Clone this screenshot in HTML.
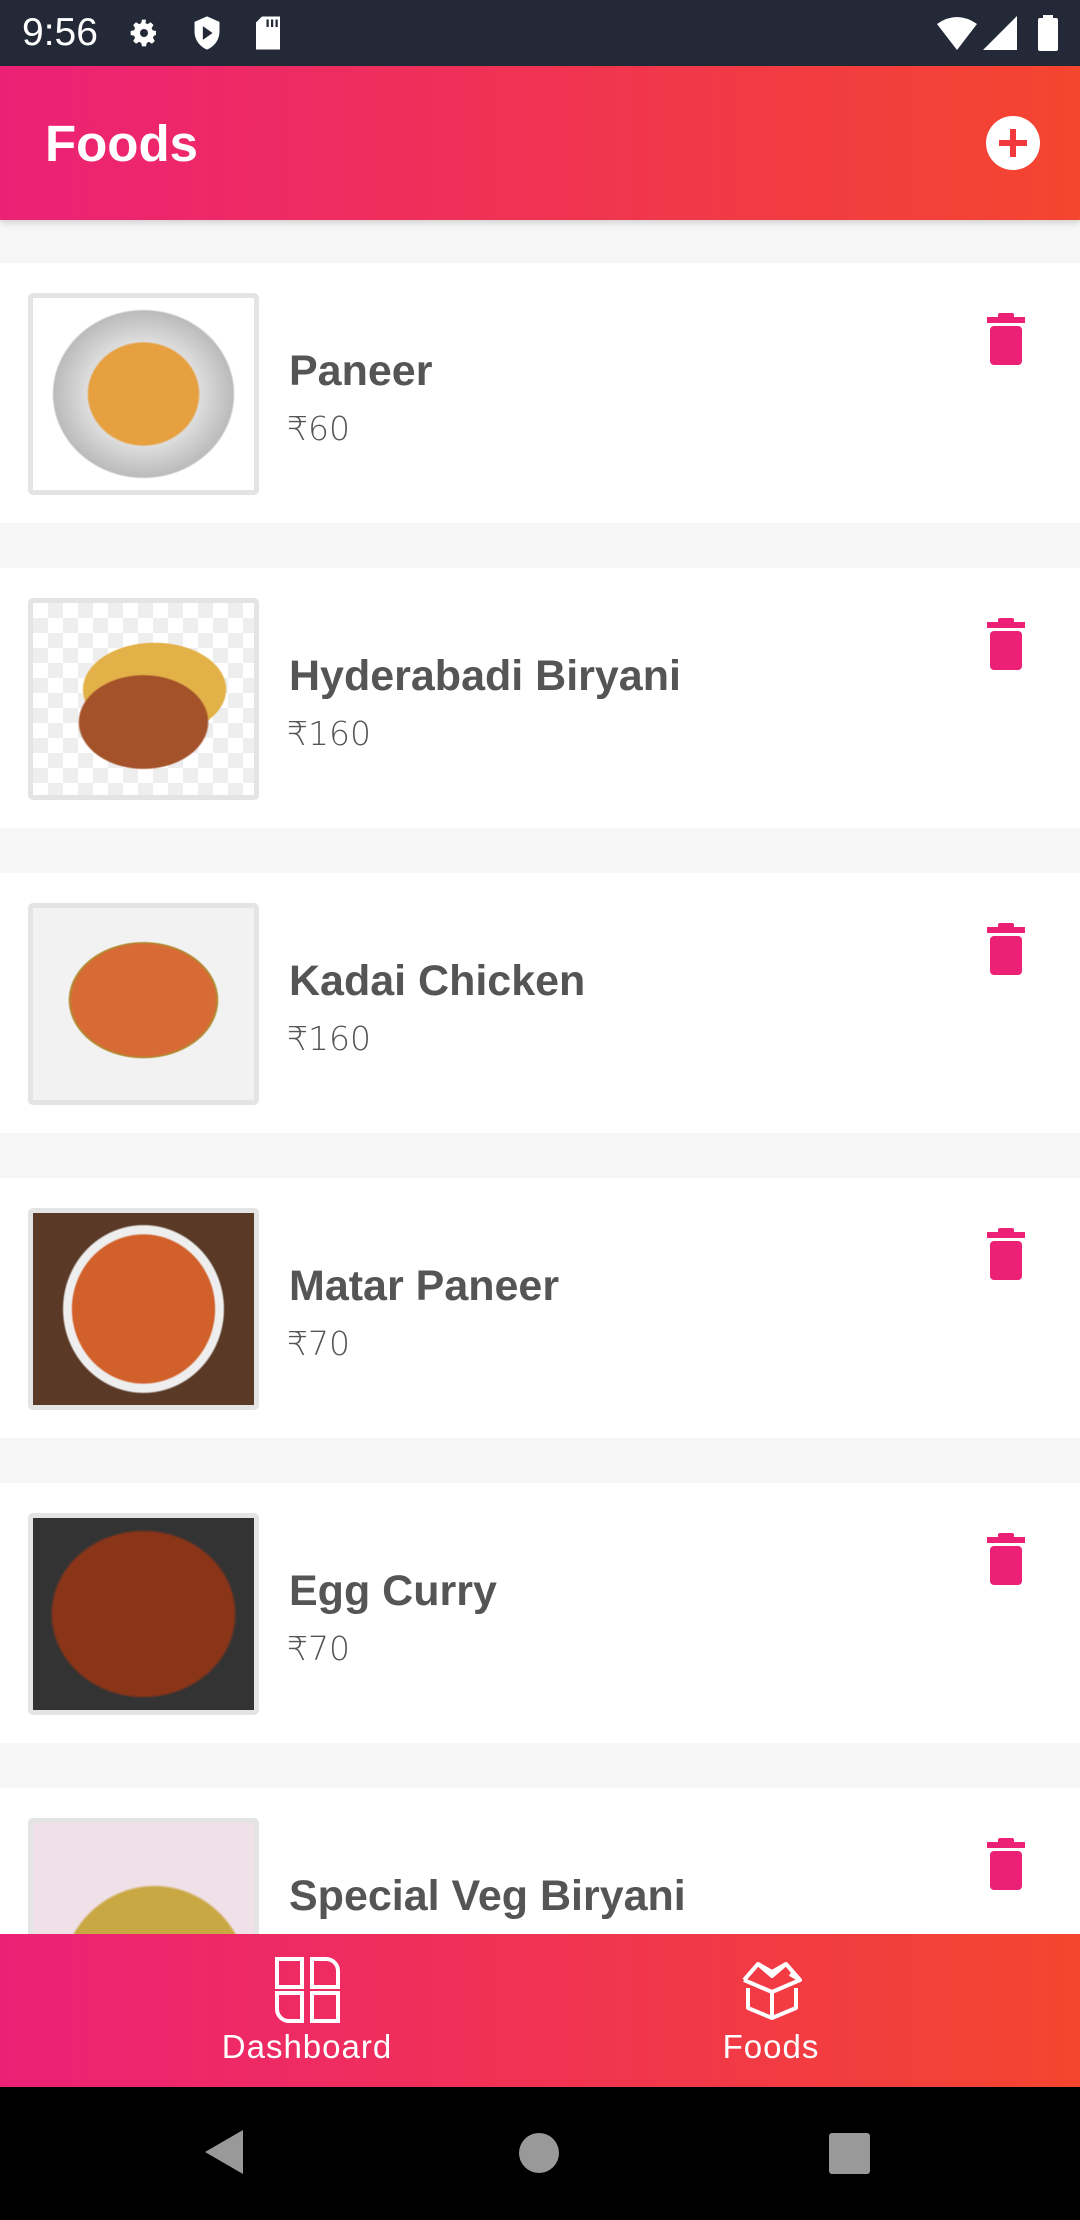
<!DOCTYPE html>
<html><head><meta charset="utf-8"><style>
*{margin:0;padding:0;box-sizing:border-box}
body{width:1080px;height:2220px;overflow:hidden;background:#f6f6f6;font-family:"Liberation Sans","DejaVu Sans",sans-serif;position:relative}
.sb{position:absolute;top:0;left:0;width:1080px;height:66px;background:#232937;color:#fff}
.sb .t{position:absolute;left:22px;top:11px;font-size:39px}
.ab{position:absolute;top:66px;left:0;width:1080px;height:154px;background:linear-gradient(90deg,#ec2176,#f4452f);box-shadow:0 3px 6px rgba(0,0,0,.15);z-index:2}
.ab .ti{position:absolute;left:45px;top:48px;color:#fff;font-size:51px;font-weight:bold}
.plus{position:absolute;left:986px;top:116px;width:54px;height:54px;border-radius:50%;background:#fff;z-index:3}
.plus:before,.plus:after{content:"";position:absolute;background:#f2393e;left:24px;top:13px;width:6px;height:28px}
.plus:after{left:13px;top:24px;width:28px;height:6px}
.card{position:absolute;left:0;width:1080px;height:260px;background:#fff}
.img{position:absolute;left:28px;top:30px;width:231px;height:202px;border:5px solid #e4e4e4;border-radius:5px;overflow:hidden}
.name{position:absolute;left:289px;top:84px;font-size:43px;font-weight:bold;color:#555;white-space:nowrap}
.price{position:absolute;left:287px;top:146px;font-size:33px;color:#555;font-family:"DejaVu Sans",sans-serif;font-weight:300}
.trash{position:absolute;left:987px;top:50px}
.bn{position:absolute;top:1934px;left:0;width:1080px;height:153px;background:linear-gradient(90deg,#ec2176,#f4452f);color:#fff}
.bn .l{position:absolute;top:94px;font-size:33px;transform:translateX(-50%);letter-spacing:1px}
.nav{position:absolute;top:2087px;left:0;width:1080px;height:133px;background:#000}
</style></head><body>
<div class="sb"><span class="t">9:56</span>
<svg style="position:absolute;left:128px;top:17px" width="32" height="32" viewBox="0 0 24 24"><path fill="#fff" d="M12 8a4 4 0 100 8 4 4 0 000-8zm9 5.5v-3l-2.6-.6-.7-1.6 1.4-2.3-2.1-2.1-2.3 1.4-1.6-.7L13.5 2h-3l-.6 2.6-1.6.7-2.3-1.4-2.1 2.1 1.4 2.3-.7 1.6L2 10.5v3l2.6.6.7 1.6-1.4 2.3 2.1 2.1 2.3-1.4 1.6.7.6 2.6h3l.6-2.6 1.6-.7 2.3 1.4 2.1-2.1-1.4-2.3.7-1.6z"/><circle cx="12" cy="12" r="3" fill="#232937"/></svg>
<svg style="position:absolute;left:190px;top:15px" width="34" height="36" viewBox="0 0 24 26"><path fill="#fff" d="M12 1L3 5v7c0 6 4 11 9 13 5-2 9-7 9-13V5z"/><path fill="#232937" d="M9 8l7 5-7 5z"/></svg>
<svg style="position:absolute;left:253px;top:15px" width="30" height="36" viewBox="0 0 20 24"><path fill="#fff" d="M6 1h12v22H2V5z"/><path fill="#232937" d="M9 3h1.5v5H9zm3 0h1.5v5H12zm3 0h1.5v5H15z"/></svg>
<svg style="position:absolute;left:937px;top:16px" width="40" height="34" viewBox="0 0 40 34"><path fill="#fff" d="M0 8Q20-6 40 8L20 34z"/></svg>
<svg style="position:absolute;left:983px;top:16px" width="34" height="34" viewBox="0 0 34 34"><path fill="#fff" d="M34 0v34H0z"/></svg>
<svg style="position:absolute;left:1037px;top:15px" width="22" height="36" viewBox="0 0 22 36"><rect x="6" y="0" width="10" height="4" fill="#fff"/><rect x="1" y="3" width="20" height="33" rx="2" fill="#fff"/></svg>
</div>
<div class="ab"><div class="ti">Foods</div></div>
<div class="plus"></div>

<div class="card" style="top:263px"><div class="img" style="background:radial-gradient(ellipse 45% 48% at 50% 50%,#e6a040 0 55%,#ddd 57%,#bbb 90%,#fff 92%)"></div><div class="name">Paneer</div><div class="price">₹60</div><svg class="trash" width="38" height="52" viewBox="0 0 38 52"><rect x="11" y="0" width="16" height="5" rx="2" fill="#ec2176"/><rect x="0" y="4" width="38" height="6" fill="#ec2176"/><rect x="3" y="13" width="32" height="39" rx="4" fill="#ec2176"/></svg></div>

<div class="card" style="top:568px"><div class="img" style="background:radial-gradient(ellipse 48% 40% at 50% 62%,#a4522a 0 60%,transparent 62%),radial-gradient(ellipse 40% 30% at 55% 45%,#e2b248 0 80%,transparent 82%),repeating-conic-gradient(#eee 0 25%,#fff 0 50%) 0 0/30px 30px"></div><div class="name">Hyderabadi Biryani</div><div class="price">₹160</div><svg class="trash" width="38" height="52" viewBox="0 0 38 52"><rect x="11" y="0" width="16" height="5" rx="2" fill="#ec2176"/><rect x="0" y="4" width="38" height="6" fill="#ec2176"/><rect x="3" y="13" width="32" height="39" rx="4" fill="#ec2176"/></svg></div>

<div class="card" style="top:873px"><div class="img" style="background:radial-gradient(ellipse 38% 34% at 50% 48%,#d86a35 0 85%,#b08a30 88%,transparent 90%),#f2f2f2"></div><div class="name">Kadai Chicken</div><div class="price">₹160</div><svg class="trash" width="38" height="52" viewBox="0 0 38 52"><rect x="11" y="0" width="16" height="5" rx="2" fill="#ec2176"/><rect x="0" y="4" width="38" height="6" fill="#ec2176"/><rect x="3" y="13" width="32" height="39" rx="4" fill="#ec2176"/></svg></div>

<div class="card" style="top:1178px"><div class="img" style="background:radial-gradient(ellipse 40% 48% at 50% 50%,#d2602a 0 80%,#eee 82%,#eee 90%,transparent 92%),#5a3a26"></div><div class="name">Matar Paneer</div><div class="price">₹70</div><svg class="trash" width="38" height="52" viewBox="0 0 38 52"><rect x="11" y="0" width="16" height="5" rx="2" fill="#ec2176"/><rect x="0" y="4" width="38" height="6" fill="#ec2176"/><rect x="3" y="13" width="32" height="39" rx="4" fill="#ec2176"/></svg></div>

<div class="card" style="top:1483px"><div class="img" style="background:radial-gradient(ellipse 48% 50% at 50% 50%,#8a3418 0 85%,#333 88%),#222"></div><div class="name">Egg Curry</div><div class="price">₹70</div><svg class="trash" width="38" height="52" viewBox="0 0 38 52"><rect x="11" y="0" width="16" height="5" rx="2" fill="#ec2176"/><rect x="0" y="4" width="38" height="6" fill="#ec2176"/><rect x="3" y="13" width="32" height="39" rx="4" fill="#ec2176"/></svg></div>

<div class="card" style="top:1788px"><div class="img" style="height:240px;background:radial-gradient(ellipse 60% 60% at 55% 70%,#c9a844 0 70%,#f0e0e8 72%),#f07090"></div><div class="name">Special Veg Biryani</div><svg class="trash" width="38" height="52" viewBox="0 0 38 52"><rect x="11" y="0" width="16" height="5" rx="2" fill="#ec2176"/><rect x="0" y="4" width="38" height="6" fill="#ec2176"/><rect x="3" y="13" width="32" height="39" rx="4" fill="#ec2176"/></svg></div>

<div class="bn">
<svg style="position:absolute;left:275px;top:23px" width="66" height="66" viewBox="0 0 66 66" fill="none" stroke="#fff" stroke-width="4"><rect x="2" y="2" width="25" height="28"/><path d="M37 2h14a12 12 0 0112 12v16H37z"/><path d="M2 36h25v28H14A12 12 0 012 52z"/><rect x="37" y="36" width="26" height="28"/></svg>
<div class="l" style="left:307px">Dashboard</div>
<svg style="position:absolute;left:740px;top:26px" width="64" height="60" viewBox="0 0 64 60" fill="none" stroke="#fff" stroke-width="4" stroke-linejoin="round"><path d="M8 28v20l24 10 24-10V28"/><path d="M4 20l28 12 28-12-10-6M32 32v26"/><path d="M4 20L18 4l14 8 14-8 14 16"/><path d="M18 4l14 12 14-12"/></svg>
<div class="l" style="left:771px">Foods</div>
</div>

<div class="nav">
<svg style="position:absolute;left:205px;top:43px" width="40" height="44" viewBox="0 0 40 44"><path fill="#999" d="M38 0v44L0 22z"/></svg>
<div style="position:absolute;left:519px;top:46px;width:40px;height:40px;border-radius:50%;background:#999"></div>
<div style="position:absolute;left:829px;top:46px;width:41px;height:41px;border-radius:3px;background:#999"></div>
</div>
</body></html>
